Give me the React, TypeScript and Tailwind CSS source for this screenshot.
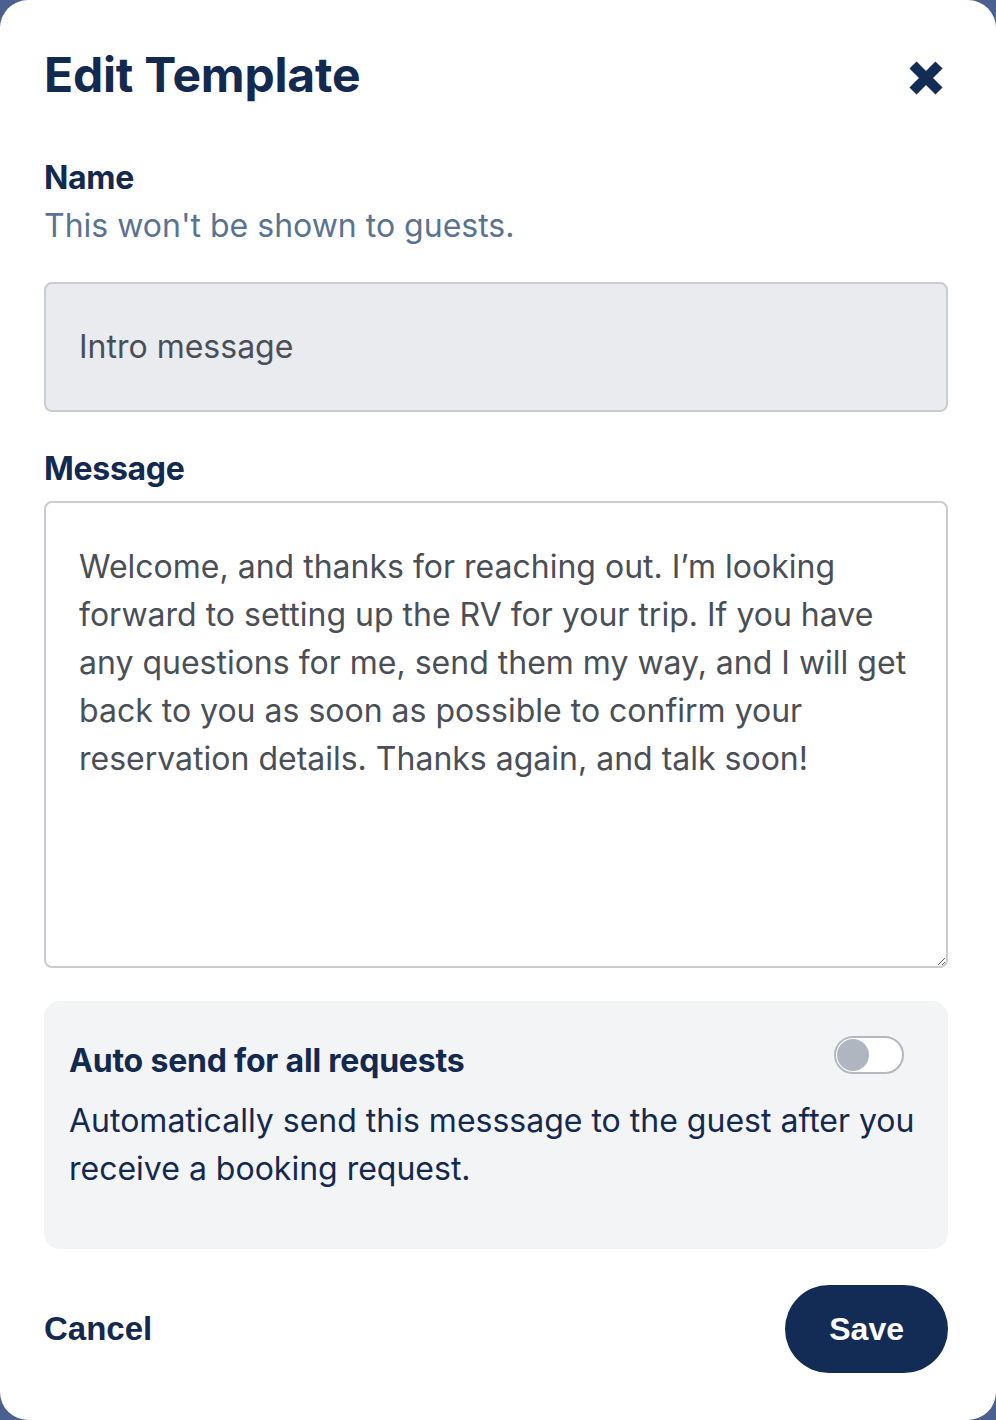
export default function App() {
  return (
    <div className="w-[996px] h-[1420px] bg-[#4a6190]">
      <div
        className="w-full h-full bg-white rounded-[28px] pl-[44px] pr-[48px] pt-[46px] flex flex-col text-[#13294f]"
        style={{ fontFamily: "Inter, 'Noto Sans', sans-serif" }}
      >
        {/* Header */}
        <div className="flex items-center justify-between h-[58px]">
          <h1 className="text-[48px] leading-[58px] font-bold tracking-[-0.2px]">Edit Template</h1>
          <button className="w-9 h-9 mr-[4px] mt-[6px] text-[#132c55]" aria-label="Close">
            <svg viewBox="0 0 36 36" className="w-9 h-9">
              <path d="M5 5 L31 31 M31 5 L5 31" stroke="currentColor" strokeWidth="10" strokeLinecap="butt" />
            </svg>
          </button>
        </div>

        {/* Name */}
        <div className="mt-[54px] text-[32px] leading-[40px] font-bold tracking-[-0.3px]">Name</div>
        <div className="mt-2 text-[32px] leading-[40px] text-[#5a7391]">This won't be shown to guests.</div>
        <div className="mt-[36px] h-[130px] flex items-center px-[33px] bg-[#e9ebef] border-2 border-[#c9ccd1] rounded-lg text-[32px] text-[#4a4f57]">
          Intro message
        </div>

        {/* Message */}
        <div className="mt-[37px] text-[32px] leading-[40px] font-bold tracking-[-0.3px]">Message</div>
        <textarea
          className="mt-3 h-[467px] w-full bg-white border-2 border-[#c9ccd1] rounded-lg pl-[33px] pr-[33px] pt-[40px] text-[32px] leading-[48px] text-[#4a4f57] outline-none"
          style={{ fontFamily: "Inter, 'Noto Sans', sans-serif" }}
          defaultValue="Welcome, and thanks for reaching out. I’m looking forward to setting up the RV for your trip. If you have any questions for me, send them my way, and I will get back to you as soon as possible to confirm your reservation details. Thanks again, and talk soon!"
        />

        {/* Auto send panel */}
        <div className="mt-[33px] h-[248px] bg-[#f3f4f6] rounded-2xl pl-[25px] pr-[22px] pt-10">
          <div className="flex items-start justify-between">
            <div className="text-[32px] leading-[40px] font-bold tracking-[-0.2px]">Auto send for all requests</div>
            <div className="-mt-[5px] mr-[22px] w-[70px] h-[38px] rounded-full border-2 border-[#b3b9c1] bg-white flex items-center pl-[1px]">
              <div className="w-[32px] h-[32px] rounded-full bg-[#b0b6bf]" />
            </div>
          </div>
          <p className="mt-4 text-[32px] leading-[48px]">
            Automatically send this messsage to the guest after you receive a booking request.
          </p>
        </div>

        {/* Footer */}
        <div
          className="mt-[36px] flex items-center justify-between"
          style={{ fontFamily: "'Liberation Sans', Arial, sans-serif" }}
        >
          <button className="text-[33px] font-bold text-[#13294f]">Cancel</button>
          <button className="h-[88px] px-[44px] rounded-full bg-[#132c55] text-white text-[32px] font-bold">
            Save
          </button>
        </div>
      </div>
    </div>
  );
}
